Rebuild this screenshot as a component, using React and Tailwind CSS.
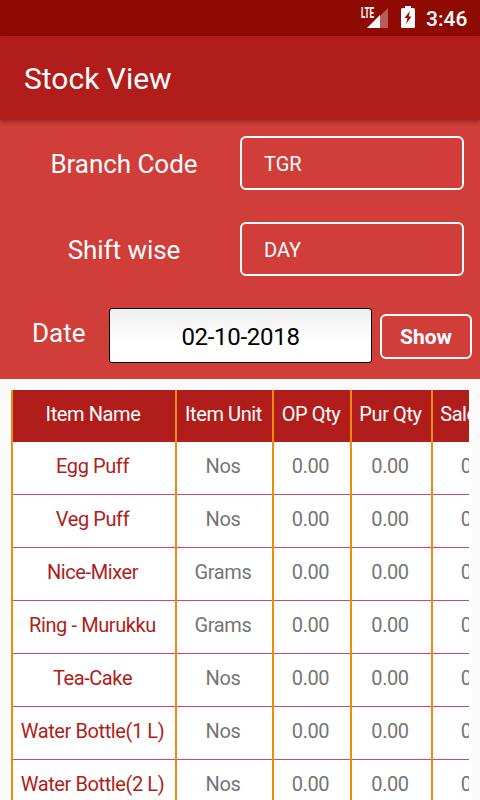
import React from "react";
import clsx from "clsx";

const columns = [
  { title: "Item Name", key: "name", width: "w-[164px]" },
  { title: "Item Unit", key: "unit", width: "w-[97px]" },
  { title: "OP Qty", key: "op", width: "w-[78px]" },
  { title: "Pur Qty", key: "pur", width: "w-[81px]" },
  { title: "Sales Qty", key: "sales", width: "w-[98px]" },
];

const items = [
  { name: "Egg Puff", unit: "Nos", op: "0.00", pur: "0.00", sales: "0.00" },
  { name: "Veg Puff", unit: "Nos", op: "0.00", pur: "0.00", sales: "0.00" },
  { name: "Nice-Mixer", unit: "Grams", op: "0.00", pur: "0.00", sales: "0.00" },
  { name: "Ring - Murukku", unit: "Grams", op: "0.00", pur: "0.00", sales: "0.00" },
  { name: "Tea-Cake", unit: "Nos", op: "0.00", pur: "0.00", sales: "0.00" },
  { name: "Water Bottle(1 L)", unit: "Nos", op: "0.00", pur: "0.00", sales: "0.00" },
  { name: "Water Bottle(2 L)", unit: "Nos", op: "0.00", pur: "0.00", sales: "0.00" },
];

function StatusBar() {
  return (
    <div className="flex h-9 shrink-0 items-center bg-[#8f0a02] pl-[361px] text-white">
      <div className="flex w-[28px]">
        <span className="h-6 w-0 origin-left scale-x-[0.58] text-[14px] leading-[14px] font-bold">
          LTE
        </span>
        <svg width="28" height="24" viewBox="0 0 28 24" className="shrink-0">
          <path d="M27 2V22H19V10Z" fill="#fff" fillOpacity="0.35" />
          <path d="M6 22L19 9V22Z" fill="#fff" />
        </svg>
      </div>
      <svg className="-mt-0.5 ml-[12px]" width="14" height="22" viewBox="0 0 14 22">
        <path
          d="M4 0H10V2H12.5Q14 2 14 3.5V20.5Q14 22 12.5 22H1.5Q0 22 0 20.5V3.5Q0 2 1.5 2H4Z"
          fill="#fff"
        />
        <path d="M9 5L3.5 12H6.5L5 18L10.5 10.5H7.6Z" fill="#8f0a02" />
      </svg>
      <span className="ml-[11px] pt-0.5 text-[21px] leading-none font-medium">3:46</span>
    </div>
  );
}

function SelectRow({ label, value }) {
  return (
    <div className="flex h-[86px] items-center py-4 pr-4 pl-2">
      <span className="w-[232px] pt-0.5 text-center text-[26px] leading-[30px] tracking-[-0.05px]">
        {label}
      </span>
      <div className="flex h-[54px] flex-1 items-center rounded-md border-2 border-white pt-0.5 pl-[22px] text-[20px]">
        {value}
      </div>
    </div>
  );
}

export default function App() {
  return (
    <div className="flex h-[800px] w-[480px] flex-col overflow-hidden bg-[#fafafa] font-[Roboto,sans-serif]">
      <StatusBar />

      <header className="z-10 flex h-[84px] shrink-0 items-center bg-[#b11d1a] pl-6 text-[30px] text-white shadow-[0_2px_4px_rgba(0,0,0,0.3)]">
        Stock View
      </header>

      <section className="h-[259px] shrink-0 bg-[#d13d39] text-white">
        <SelectRow label="Branch Code" value="TGR" />
        <SelectRow label="Shift wise" value="DAY" />
        <div className="flex pt-4 pr-2">
          <span className="w-[109px] pt-[10px] pl-8 text-[26px] leading-[30px]">Date</span>
          <div className="flex h-[55px] w-[263px] items-center justify-center rounded-[3px] border border-black bg-linear-to-b from-[#efefef] to-white to-60% pt-0.5 text-[24px] tracking-[-0.3px] text-black">
            02-10-2018
          </div>
          <button className="mt-1.5 ml-2 h-[45px] flex-1 rounded-md border-2 border-white pt-0.5 text-[21px] leading-none font-bold">
            Show
          </button>
        </div>
      </section>

      <div className="mx-2 mt-[11px] flex-1 overflow-hidden bg-white px-[3px]">
        <div className="overflow-hidden text-[20px] tracking-[-0.4px]">
          <div className="flex h-[52px] w-max bg-[#b11d1a] text-white">
            {columns.map((col) => (
              <div
                key={col.key}
                className={clsx(
                  "flex shrink-0 items-center justify-center border-l-2 border-[#f28a10] pr-0.5 pb-1 whitespace-nowrap",
                  col.width
                )}
              >
                {col.title}
              </div>
            ))}
          </div>
          {items.map((item) => (
            <div key={item.name} className="flex h-[53px] w-max">
              {columns.map((col) => (
                <div
                  key={col.key}
                  className={clsx("shrink-0 border-l-2 border-[#f28a10]", col.width)}
                >
                  <div
                    className={clsx(
                      "flex h-full items-center justify-center border-b border-[#c74a78] pr-[3px] pb-[5px] whitespace-nowrap",
                      col.key === "name" ? "text-[#b11d1a]" : "text-[#757575]"
                    )}
                  >
                    {item[col.key]}
                  </div>
                </div>
              ))}
            </div>
          ))}
        </div>
      </div>
    </div>
  );
}
